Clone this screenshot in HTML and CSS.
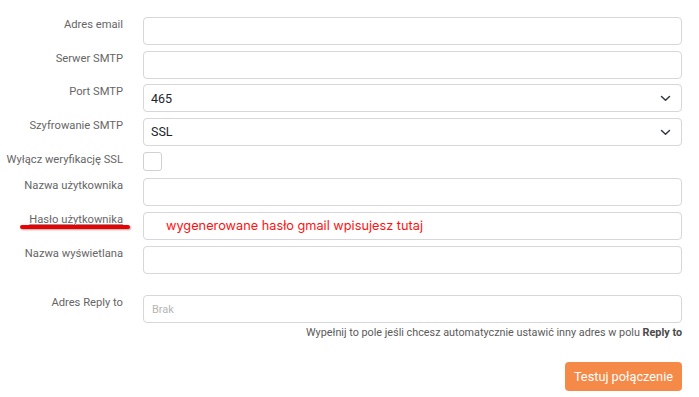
FILE: index.html
```html
<!DOCTYPE html>
<html lang="pl">
<head>
    <meta charset="UTF-8">
    <meta name="viewport" content="width=device-width, initial-scale=1.0">
    <title>Ustawienia SMTP</title>
    <link rel="stylesheet" href="styles.css">
</head>
<body>
    <form class="smtp-form">
        <div class="form-row">
            <label class="form-label" for="email">Adres email</label>
            <div class="form-field"><input type="text" id="email" class="form-input"></div>
        </div>
        <div class="form-row">
            <label class="form-label" for="server">Serwer SMTP</label>
            <div class="form-field"><input type="text" id="server" class="form-input"></div>
        </div>
        <div class="form-row">
            <label class="form-label" for="port">Port SMTP</label>
            <div class="form-field select-wrap">
                <select id="port" class="form-input form-select">
                    <option>465</option>
                    <option>587</option>
                    <option>25</option>
                </select>
                <svg class="chevron" width="11" height="7" viewBox="0 0 11 7"><path d="M1.5 1.5l4 3.8 4-3.8" fill="none" stroke="#343a40" stroke-width="1.5" stroke-linecap="round" stroke-linejoin="round"/></svg>
            </div>
        </div>
        <div class="form-row">
            <label class="form-label" for="crypt">Szyfrowanie SMTP</label>
            <div class="form-field select-wrap">
                <select id="crypt" class="form-input form-select">
                    <option>SSL</option>
                    <option>TLS</option>
                    <option>Brak</option>
                </select>
                <svg class="chevron" width="11" height="7" viewBox="0 0 11 7"><path d="M1.5 1.5l4 3.8 4-3.8" fill="none" stroke="#343a40" stroke-width="1.5" stroke-linecap="round" stroke-linejoin="round"/></svg>
            </div>
        </div>
        <div class="form-row row-check">
            <label class="form-label" for="nossl">Wyłącz weryfikację SSL</label>
            <div class="form-field"><input type="checkbox" id="nossl" class="form-check"></div>
        </div>
        <div class="form-row">
            <label class="form-label" for="user">Nazwa użytkownika</label>
            <div class="form-field"><input type="text" id="user" class="form-input"></div>
        </div>
        <div class="form-row">
            <label class="form-label label-marked" for="pass">Hasło użytkownika<span class="red-stroke"></span></label>
            <div class="form-field">
                <div class="form-input note-box">wygenerowane hasło gmail wpisujesz tutaj</div>
            </div>
        </div>
        <div class="form-row row-spaced">
            <label class="form-label" for="display">Nazwa wyświetlana</label>
            <div class="form-field"><input type="text" id="display" class="form-input"></div>
        </div>
        <div class="form-row">
            <label class="form-label" for="reply">Adres Reply to</label>
            <div class="form-field">
                <input type="text" id="reply" class="form-input" placeholder="Brak">
                <p class="form-help">Wypełnij to pole jeśli chcesz automatycznie ustawić inny adres w polu <b>Reply to</b></p>
            </div>
        </div>
        <div class="form-actions">
            <button type="button" class="btn-test">Testuj połączenie</button>
        </div>
    </form>
</body>
</html>
```

FILE: styles.css
```css
body {
    margin: 0;
    background: #ffffff;
    font-family: Roboto, "Liberation Sans", sans-serif;
}
.smtp-form {
    padding: 17px 17px 0 0;
}
.form-row {
    display: flex;
    margin-bottom: 5.67px;
}
.form-label {
    position: relative;
    width: 123px;
    flex: none;
    padding-top: 1px;
    margin-right: 20px;
    text-align: right;
    font-size: 11.2px;
    line-height: 13px;
    color: #666666;
    white-space: nowrap;
}
.form-field {
    flex: 1;
    min-width: 0;
}
.form-input {
    display: block;
    box-sizing: border-box;
    width: 100%;
    height: 28px;
    margin: 0;
    padding: 0 8px;
    border: 1px solid #d6d6dc;
    border-radius: 4px;
    background: #ffffff;
    font-family: Roboto, "Liberation Sans", sans-serif;
    font-size: 12.5px;
    color: #212529;
    outline: none;
}
.form-input::placeholder {
    font-size: 11px;
    color: #b5b5b5;
}
.select-wrap {
    position: relative;
}
.form-select {
    appearance: none;
    -webkit-appearance: none;
    padding-left: 7px;
}
.chevron {
    position: absolute;
    right: 11px;
    top: 11px;
    pointer-events: none;
}
.row-check {
    margin-bottom: 7.67px;
}
.form-check {
    appearance: none;
    -webkit-appearance: none;
    display: block;
    width: 19px;
    height: 19px;
    margin: 0;
    border: 1px solid #d0d0d6;
    border-radius: 3px;
    background: #ffffff;
}
.label-marked {
    text-decoration: underline;
    text-decoration-color: #9a9a9a;
    text-decoration-thickness: 1px;
    text-underline-offset: 1px;
}
.red-stroke {
    position: absolute;
    left: 20px;
    top: 13px;
    width: 110px;
    height: 4px;
    border-radius: 2px;
    background: #ee0000;
    box-shadow: 1px 1px 2px rgba(0, 0, 0, 0.35);
}
.note-box {
    display: flex;
    align-items: center;
    padding-left: 22px;
    font-family: Inter, "Open Sans", sans-serif;
    font-size: 12.75px;
    color: #ff1111;
}
.row-spaced {
    margin-bottom: 21px;
}
.form-help {
    margin: 3px 0 0;
    text-align: right;
    font-size: 10.8px;
    line-height: 14px;
    color: #5a5a5a;
}
.form-help b {
    color: #4a4a4a;
}
.form-actions {
    display: flex;
    justify-content: flex-end;
    margin-top: 22px;
}
.btn-test {
    height: 29px;
    padding: 0 9px;
    border: none;
    border-radius: 4px;
    background: #f58a48;
    color: #ffffff;
    font-family: Roboto, "Liberation Sans", sans-serif;
    font-size: 12.75px;
    cursor: pointer;
}
```
